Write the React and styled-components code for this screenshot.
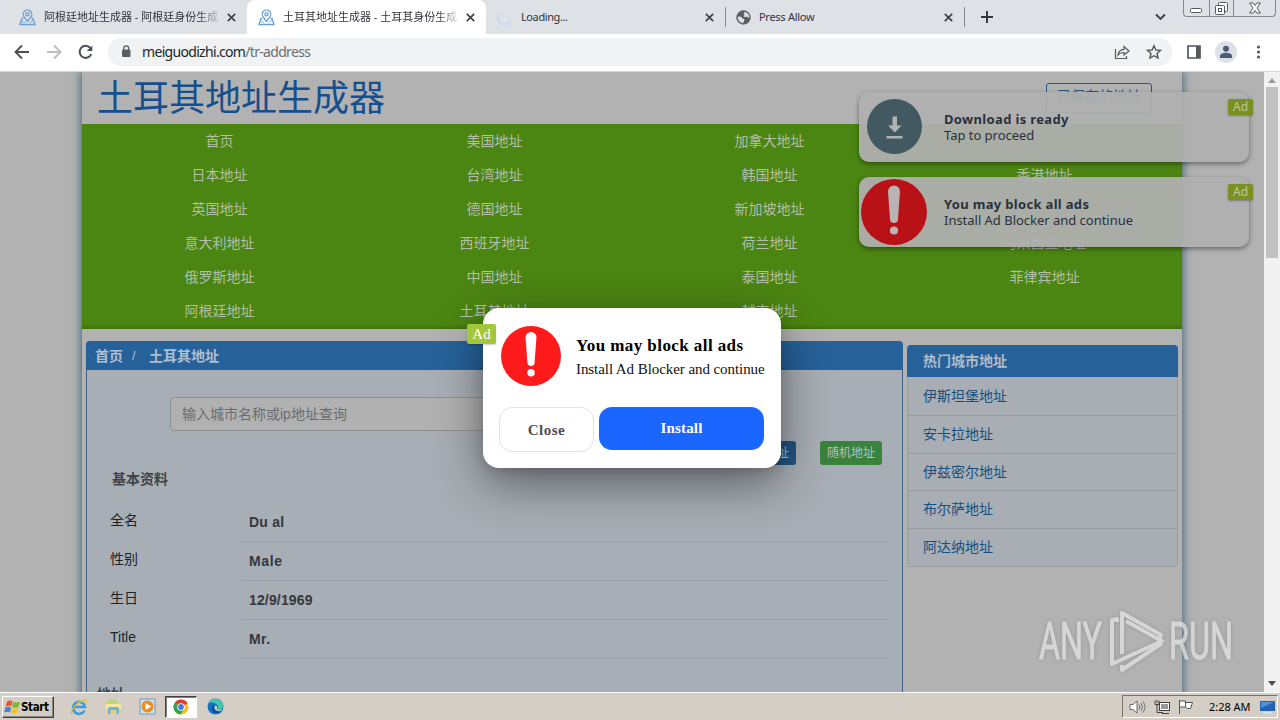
import React from 'react';
import styled, { createGlobalStyle } from 'styled-components';

const Global = createGlobalStyle`
  * { box-sizing: border-box; }
  body { margin: 0; overflow: hidden; font-family: "Liberation Sans", "Noto Sans CJK SC", sans-serif; }
  svg { display: block; flex: none; }
`;
const Screen = styled.div`width: 1280px; height: 720px; display: flex; flex-direction: column; overflow: hidden; position: relative;`;

/* browser chrome */
const TabStrip = styled.div`height: 34px; background: #dee1e6; display: flex; align-items: flex-start; flex: none; padding-left: 8px;`;
const Tab = styled.div`
  width: 239px; height: 34px; display: flex; align-items: center; padding: 0 11px 0 11px;
  border-radius: 8px 8px 0 0; background: ${p => (p.$active ? '#fff' : 'transparent')};
`;
const TabTitle = styled.div`
  font: 11px/16px "Noto Sans", "Noto Sans CJK SC", sans-serif; color: #33363b; letter-spacing: ${p => p.$ls || 0}px;
  width: 176px; margin-left: 8px; white-space: nowrap; overflow: hidden;
  ${p => p.$fade && 'mask-image: linear-gradient(90deg, #000 155px, transparent 178px);'}
`;
const TabClose = styled.div`margin-left: auto;`;
const TabDivider = styled.div`width: 1px; height: 20px; background: #85888d; margin: 7px -1px 0 0;`;
const NewTab = styled.div`margin: 11px 0 0 17px;`;
const WindowControls = styled.div`margin-left: auto; display: flex; align-items: flex-start;`;
const Chevron = styled.div`margin: 13px 17px 0 0;`;
const WinButtons = styled.div`
  display: flex; height: 17px; width: 93px; margin-right: 4px; border: 1px solid #85898f; border-top: 0; border-radius: 0 0 4px 4px;
`;
const WinButton = styled.div`
  width: ${p => p.$w}px; display: flex; justify-content: center; align-items: center;
  & + & { border-left: 1px solid #85898f; }
`;
const Toolbar = styled.div`height: 38px; background: #fff; border-bottom: 1px solid #d5d6d8; display: flex; align-items: center; flex: none; padding: 0 12px 2px 14px;`;
const NavIcons = styled.div`display: flex; gap: 16px; width: 94px;`;
const UrlBar = styled.div`width: 1064px; height: 28px; border-radius: 14px; background: #f0f2f4; display: flex; align-items: center; padding: 0 10px 0 13px;`;
const Url = styled.div`font: 14px/20px "Noto Sans", sans-serif; letter-spacing: -0.68px; margin-left: 11px; color: #222427; span { color: #6a6e73; }`;
const UrlActions = styled.div`margin-left: auto; display: flex; gap: 16px;`;
const ToolIcons = styled.div`margin-left: auto; display: flex; align-items: center; gap: 11px;`;
const Avatar = styled.div`width: 22px; height: 22px; border-radius: 50%; background: #dde1e7; display: flex; align-items: center; justify-content: center;`;

/* page */
const Viewport = styled.div`height: 620px; flex: none; display: flex; overflow: hidden; position: relative;`;
const PageArea = styled.div`width: 1264px; background: #b2b2b2; padding-left: 82px; overflow: hidden;`;
const Site = styled.div`width: 1100px; height: 640px; background: #b2b2b2; box-shadow: 0 0 9px 1px #426377;`;
const SiteHeader = styled.div`height: 52px; display: flex; justify-content: space-between; padding: 0 30px 0 15px;`;
const SiteTitle = styled.h1`margin: 0; font: 400 36px/47px "Noto Sans CJK SC", sans-serif; color: #154f8e;`;
const SavedButton = styled.div`
  width: 106px; height: 30px; margin-top: 11px; border: 1px solid #28548a; border-radius: 3px; color: #28548a;
  font: 14px/20px "Noto Sans CJK SC", sans-serif; text-align: center; padding-top: 1px;
`;
const CountryNav = styled.nav`
  background: #4b8512; height: 205px; display: grid; grid-template-columns: repeat(4, 275px); grid-auto-rows: 34px;
  box-shadow: inset 0 -3px 3px -1px #3e7010;
`;
const CountryLink = styled.a`text-align: center; font: 14px/32px "Noto Sans CJK SC", sans-serif; color: #b3bfa7;`;
const Columns = styled.div`display: flex; align-items: flex-start; gap: 4px; padding: 12px 4px 0;`;
const MainPanel = styled.section`width: 817px; height: 420px; border: 1px solid #38618b; border-radius: 4px 4px 0 0; background: #a8aeb5;`;
const Breadcrumb = styled.div`
  height: 29px; margin: -1px -1px 0; background: #266299; border-radius: 4px 4px 0 0; padding-left: 9px; display: flex;
  font: 700 14px/29px "Noto Sans CJK SC", sans-serif; color: #aebfd0;
  i { font: 13px/29px "Liberation Sans", sans-serif; width: 26px; padding-left: 9px; }
`;
const SearchInput = styled.div`
  width: 500px; height: 34px; margin: 27px 0 0 83px; border: 1px solid #8e9194; border-radius: 4px; background: #b1b1b1; padding-left: 11px;
  font: 14px/32px "Liberation Sans", "Noto Sans CJK SC", sans-serif; color: #6b6c6d;
`;
const ButtonRow = styled.div`display: flex; justify-content: flex-end; gap: 24px; margin: 10px 20px 0 0;`;
const SmallButton = styled.div`
  width: 62px; height: 24px; border-radius: 3px; text-align: center; color: #b3bfc3; background: ${p => (p.$green ? '#39833c' : '#235482')};
  font: 12px/22px "Noto Sans CJK SC", sans-serif;
`;
const SectionTitle = styled.div`font: 700 14px/20px "Noto Sans CJK SC", sans-serif; color: #404447; margin: ${p => p.$m};`;
const Fact = styled.div`height: 39px; display: flex; padding-left: 23px;`;
const FactLabel = styled.div`width: 131px; font: 14px/35px "Liberation Sans", "Noto Sans CJK SC", sans-serif; color: #202326;`;
const FactValue = styled.div`
  width: 647px; padding-left: 8px; border-bottom: 1px solid #9aa0a8; font: 700 14px/39px "Liberation Sans", sans-serif; color: #35383b;
  letter-spacing: ${p => p.$ls || 0}px;
`;
const Sidebar = styled.aside`width: 271px; margin-top: 4px; border: 1px solid #999ea3; border-radius: 4px; background: #a8aeb4;`;
const SidebarTitle = styled.div`
  height: 32px; margin: -1px -1px 0; background: #266299; border-radius: 4px 4px 0 0; padding-left: 16px;
  font: 700 14px/31px "Noto Sans CJK SC", sans-serif; color: #aebccb;
`;
const CityLink = styled.a`
  display: block; height: 37.75px; padding-left: 15px; font: 14px/35px "Noto Sans CJK SC", sans-serif; color: #174e80;
  &:first-of-type { line-height: 37px; }
  & + & { border-top: 1px solid #979ca1; }
`;
const Scrollbar = styled.div`width: 16px; background: #f1f1f1; display: flex; flex-direction: column; align-items: center; padding: 6px 0 6px;`;
const Thumb = styled.div`width: 12px; height: 171px; background: #c1c1c1; margin: 4px 0 auto;`;

/* overlays */
const Toasts = styled.div`position: absolute; left: 859px; top: 20px; width: 390px; display: flex; flex-direction: column; gap: 15px;`;
const Toast = styled.div`
  height: 70px; border-radius: 10px; background: rgba(175, 175, 175, 0.94); box-shadow: 0 2px 5px rgba(0, 0, 0, 0.42);
  display: flex; align-items: center; padding-left: ${p => p.$pad}px; position: relative;
`;
const ToastIcon = styled.div`margin-bottom: ${p => p.$up || 0}px;`;
const ToastText = styled.div`
  margin-left: ${p => p.$ml}px; color: #2b313b; font: 13px/16px "Noto Sans", sans-serif; letter-spacing: ${p => p.$ls}px;
  b { display: block; letter-spacing: ${p => p.$bls}px; }
`;
const ToastBadge = styled.div`
  position: absolute; right: -4px; top: 7px; width: 25px; height: 16px; background: #7b9023; color: #bdc5a4; text-align: center; border-radius: 2px;
  font: 12px/16px "Noto Sans", sans-serif; box-shadow: 0 1px 2px rgba(0, 0, 0, 0.3);
`;
const Modal = styled.div`
  position: absolute; left: 483px; top: 236px; width: 298px; height: 160px; border-radius: 16px; background: #fff; padding: 16px 16px 16px;
  font-family: "Liberation Serif", serif; box-shadow: 0 16px 48px rgba(0, 0, 0, 0.45), 0 4px 12px rgba(0, 0, 0, 0.12);
`;
const ModalBadge = styled.div`
  position: absolute; left: -16px; top: 16px; width: 29px; height: 20px; border-radius: 2px; background: #a4c639; color: #fff; text-align: center;
  font: 15px/20px "Liberation Serif", serif; box-shadow: 0 1px 2px rgba(0, 0, 0, 0.2);
`;
const ModalTop = styled.div`display: flex; height: 83px; padding: 2px 0 0 2px;`;
const ModalText = styled.div`
  margin: 9px 0 0 15px; white-space: nowrap; font-size: 15px; line-height: 22px; color: #111; letter-spacing: -0.07px;
  b { display: block; font-size: 17px; line-height: 22px; color: #000; letter-spacing: 0.42px; height: 23px; }
`;
const ModalButtons = styled.div`display: flex; gap: 5px; align-items: flex-start;`;
const ModalButton = styled.div`
  width: ${p => (p.$primary ? 165 : 95)}px; height: ${p => (p.$primary ? 43 : 45)}px; border-radius: 13px; text-align: center;
  font-weight: 700; font-size: 15px; line-height: ${p => (p.$primary ? 43 : 45)}px; letter-spacing: ${p => (p.$primary ? 0.15 : 0.5)}px;
  background: ${p => (p.$primary ? '#1b66ff' : '#fff')}; color: ${p => (p.$primary ? '#fff' : '#4e5057')};
  border: ${p => (p.$primary ? '0' : '1px solid #e2e3e6')};
`;
const Watermark = styled.div`position: absolute; left: 1036px; top: 534px; opacity: 0.75; filter: drop-shadow(0 0 2px rgba(90, 90, 90, 0.4));`;

/* taskbar */
const Taskbar = styled.div`height: 28px; background: #d4cec6; border-top: 1px solid #fff; display: flex; align-items: center; padding: 0 2px 0 2px; flex: none;`;
const Start = styled.div`
  width: 52px; height: 22px; display: flex; align-items: center; padding-left: 1px; gap: 1px; border: 1px solid; border-color: #fff #404040 #404040 #fff;
  box-shadow: inset -1px -1px 0 #8a867f; font: 700 11.5px/20px "DejaVu Sans Condensed", "DejaVu Sans", sans-serif; letter-spacing: -0.35px; color: #000;
`;
const QuickLaunch = styled.div`display: flex; align-items: center; margin-left: 8px;`;
const TaskIcon = styled.div`
  width: ${p => (p.$active ? 32 : 34)}px; height: 22px; display: flex; align-items: center; justify-content: center;
  ${p => p.$active && 'background: #fff; border: 1px solid; border-color: #404040 #fff #fff #404040; box-shadow: inset 1px 1px 0 #808080; margin: 0 1px;'}
`;
const Tray = styled.div`
  margin-left: auto; height: 23px; width: 156px; display: flex; align-items: center; border: 1px solid; border-color: #77736c #fff #fff #77736c; padding: 0 2px 0 6px;
  gap: 8px;
`;
const Clock = styled.div`font: 11px/16px "Noto Sans", sans-serif; letter-spacing: -0.05px; color: #000; margin: 0 auto 0 6px; white-space: nowrap;`;

const PinIcon = () => (
  <svg width="17" height="17" viewBox="0 0 17 17" fill="none" stroke="#6a9fd2" strokeWidth="1.3">
    <path d="M4.300 9.500H3L1 15.500h15l-2-6h-1.300M8.500 12.500 5.300 8.200a4.300 4.300 0 1 1 6.400 0z" />
    <circle cx="8.500" cy="5.300" r="1.600" />
    <path d="M2.500 12.500l3.500 1M10.500 13.500l4-2.500" strokeWidth=".8" />
  </svg>
);
const Cross = ({ s = 9 }) => (
  <svg width={s} height={s} viewBox="0 0 9 9" stroke="#3e4146" strokeWidth="1.7"><path d="M.8.8l7.4 7.4M8.2.8.8 8.2" /></svg>
);
const GlobeIcon = () => (
  <svg width="15" height="15" viewBox="0 0 15 15">
    <circle cx="7.5" cy="7.5" r="7.2" fill="#5a5e63" />
    <path d="M2 6.500l3 .3 1.600 1.700 1.700.4v1.500L7 13.200C4 12.800 2 10.500 1.700 8zM8.500 1.900l-.8 1.700 1 1.300-1.500 1.200 1.600 1 2.700-.4 1.600 1.500.3-1.500C13.200 4.400 11.200 2.200 8.500 1.900z" fill="#dee1e6" />
  </svg>
);
const Alert = ({ s, red, mark }) => (
  <svg width={s} height={s} viewBox="0 0 66 66">
    <circle cx="33" cy="33" r="33" fill={red} />
    <path d="M27 12.500a6 6 0 0 1 12 0l-2 27.500a4 4 0 0 1-8 0z" fill={mark} />
    <circle cx="33" cy="51.500" r="4.100" fill={mark} />
  </svg>
);

const countries = [
  '首页', '美国地址', '加拿大地址', '',
  '日本地址', '台湾地址', '韩国地址', '香港地址',
  '英国地址', '德国地址', '新加坡地址', '',
  '意大利地址', '西班牙地址', '荷兰地址', '马来西亚地址',
  '俄罗斯地址', '中国地址', '泰国地址', '菲律宾地址',
  '阿根廷地址', '土耳其地址', '越南地址', '',
];
const facts = [['全名', 'Du al', 0.2], ['性别', 'Male', 0.6], ['生日', '12/9/1969', 0.15], ['Title', 'Mr.', 0.4]];
const cities = ['伊斯坦堡地址', '安卡拉地址', '伊兹密尔地址', '布尔萨地址', '阿达纳地址'];

function Chrome() {
  return (
    <>
      <TabStrip>
        <Tab><PinIcon /><TabTitle $fade>阿根廷地址生成器 - 阿根廷身份生成</TabTitle><TabClose><Cross /></TabClose></Tab>
        <Tab $active><PinIcon /><TabTitle $fade>土耳其地址生成器 - 土耳其身份生成</TabTitle><TabClose><Cross /></TabClose></Tab>
        <Tab>
          <svg width="16" height="16" viewBox="0 0 16 16" fill="none" stroke="#c6d7f5" strokeWidth="1.8"><path d="M1.500 5a7 7 0 0 0 12 7.200" /></svg>
          <TabTitle $ls={-0.4}>Loading...</TabTitle><TabClose><Cross /></TabClose>
        </Tab>
        <TabDivider />
        <Tab><GlobeIcon /><TabTitle $ls={-0.28}>Press Allow</TabTitle><TabClose><Cross /></TabClose></Tab>
        <TabDivider />
        <NewTab><svg width="12" height="12" viewBox="0 0 12 12" stroke="#33363b" strokeWidth="1.900"><path d="M6 0v12M0 6h12" /></svg></NewTab>
        <WindowControls>
          <Chevron><svg width="11" height="8" viewBox="0 0 11 8" fill="none" stroke="#3c4045" strokeWidth="1.900"><path d="M1 1.500l4.500 4.500L10 1.500" /></svg></Chevron>
          <WinButtons>
            <WinButton $w={25}><svg width="13" height="17" viewBox="0 0 13 17" fill="#fff" stroke="#55595f"><rect x=".5" y="8.500" width="11" height="4" rx="1" /></svg></WinButton>
            <WinButton $w={25}><svg width="13" height="17" viewBox="0 0 13 17" fill="#fff" stroke="#55595f"><rect x="3.500" y="2.500" width="9" height="9" rx="1" /><rect x=".5" y="5.500" width="9" height="9" rx="1" /><rect x="3.500" y="8.500" width="3" height="3" /></svg></WinButton>
            <WinButton $w={42}><svg width="12" height="17" viewBox="0 0 12 17" fill="#fff" stroke="#55595f"><path d="M.7 3h3.500L6 5.500 7.800 3h3.500L8 8l3.300 5H7.800L6 10.500 4.200 13H.7L4 8z" /></svg></WinButton>
          </WinButtons>
        </WindowControls>
      </TabStrip>
      <Toolbar>
        <NavIcons>
          <svg width="16" height="16" viewBox="0 0 16 16" fill="none" stroke="#4c5054" strokeWidth="1.900"><path d="M15 8H2M8 1.500 1.500 8 8 14.500" /></svg>
          <svg width="16" height="16" viewBox="0 0 16 16" fill="none" stroke="#bcbec1" strokeWidth="1.900"><path d="M1 8h13M8 1.500 14.500 8 8 14.500" /></svg>
          <svg width="16" height="16" viewBox="0 0 16 16"><path d="M13.300 10A6 6 0 1 1 12.300 4" fill="none" stroke="#4c5054" strokeWidth="2" /><path d="M14.300 1.500v5.500H8.800z" fill="#4c5054" /></svg>
        </NavIcons>
        <UrlBar>
          <svg width="10" height="13" viewBox="0 0 10 13"><rect x="1" y="4.500" width="8.500" height="7.500" rx="1" fill="#5a5e63" /><path d="M2.800 5V3.200a2.400 2.400 0 0 1 4.800 0V5" fill="none" stroke="#5a5e63" strokeWidth="1.300" /></svg>
          <Url>meiguodizhi.com<span>/tr-address</span></Url>
          <UrlActions>
            <svg width="16" height="16" viewBox="0 0 16 16" fill="none" stroke="#55595e" strokeWidth="1.200"><path d="M1.500 5v9.500h11V12M4 11c.5-4 3-5.500 6-5.600V2.500L15 7l-5 4V8.500C7.500 8.500 5.500 9 4 11z" /></svg>
            <svg width="16" height="16" viewBox="0 0 16 16" fill="none" stroke="#55595e" strokeWidth="1.400"><path d="M8 1.700l1.900 4.300 4.700.4-3.600 3.100 1.100 4.600L8 11.700l-4.100 2.400L5 9.500 1.400 6.400 6.100 6z" /></svg>
          </UrlActions>
        </UrlBar>
        <ToolIcons>
          <svg width="17" height="14" viewBox="0 0 17 14"><path d="M1 1h12v12H1z" fill="none" stroke="#55585d" strokeWidth="1.700" /><path d="M9 1h4v12H9z" fill="#55585d" /></svg>
          <Avatar><svg width="14" height="14" viewBox="0 0 14 14" fill="#4a5a78"><circle cx="7" cy="3.700" r="3" /><path d="M1 13v-2c0-2 3.500-3.200 6-3.200s6 1.200 6 3.200v2z" /></svg></Avatar>
          <svg width="20" height="14" viewBox="0 0 20 14" fill="#55585d"><circle cx="10.500" cy="2" r="1.600" /><circle cx="10.500" cy="7" r="1.600" /><circle cx="10.500" cy="12" r="1.600" /></svg>
        </ToolIcons>
      </Toolbar>
    </>
  );
}

function AddressPage() {
  return (
    <PageArea>
      <Site>
        <SiteHeader><SiteTitle>土耳其地址生成器</SiteTitle><SavedButton>已保存的地址</SavedButton></SiteHeader>
        <CountryNav>{countries.map((c, i) => <CountryLink key={i}>{c}</CountryLink>)}</CountryNav>
        <Columns>
          <MainPanel>
            <Breadcrumb>首页<i>/</i>土耳其地址</Breadcrumb>
            <SearchInput>输入城市名称或ip地址查询</SearchInput>
            <ButtonRow><SmallButton>保存地址</SmallButton><SmallButton $green>随机地址</SmallButton></ButtonRow>
            <SectionTitle $m="3px 0 15px 25px">基本资料</SectionTitle>
            {facts.map(([k, v, ls]) => <Fact key={k}><FactLabel>{k}</FactLabel><FactValue $ls={ls}>{v}</FactValue></Fact>)}
            <SectionTitle $m="24px 0 0 10px">地址</SectionTitle>
          </MainPanel>
          <Sidebar>
            <SidebarTitle>热门城市地址</SidebarTitle>
            {cities.map(c => <CityLink key={c}>{c}</CityLink>)}
          </Sidebar>
        </Columns>
      </Site>
    </PageArea>
  );
}

function Ads() {
  return (
    <>
      <Toasts>
        <Toast $pad={8}>
          <ToastIcon $up={1}>
            <svg width="55" height="55" viewBox="0 0 55 55"><circle cx="27.500" cy="27.500" r="27.500" fill="#435962" /><path d="M25.500 17.500h4.500v9h4.500l-6.700 7-6.700-7h4.400zM19.500 37h16v2.500h-16z" fill="#b0b3b4" /></svg>
          </ToastIcon>
          <ToastText $ml={22} $ls={-0.03} $bls={0.35}><b>Download is ready</b>Tap to proceed</ToastText>
          <ToastBadge>Ad</ToastBadge>
        </Toast>
        <Toast $pad={2}>
          <ToastIcon><Alert s={66} red="#b81217" mark="#b9b3b3" /></ToastIcon>
          <ToastText $ml={17} $ls={-0.02} $bls={0.32}><b>You may block all ads</b>Install Ad Blocker and continue</ToastText>
          <ToastBadge>Ad</ToastBadge>
        </Toast>
      </Toasts>
      <Modal>
        <ModalBadge>Ad</ModalBadge>
        <ModalTop>
          <Alert s={60} red="#ff1a1c" mark="#fff" />
          <ModalText><b>You may block all ads</b>Install Ad Blocker and continue</ModalText>
        </ModalTop>
        <ModalButtons><ModalButton>Close</ModalButton><ModalButton $primary>Install</ModalButton></ModalButtons>
      </Modal>
      <Watermark>
        <svg width="200" height="70" viewBox="0 0 200 70">
          <g fill="#e2e2e2" stroke="#e2e2e2" strokeWidth=".9" fontFamily="Roboto, sans-serif" fontWeight="400" fontSize="52">
            <text x="3" y="53" textLength="63" lengthAdjust="spacingAndGlyphs">ANY</text>
            <text x="133" y="53" textLength="64" lengthAdjust="spacingAndGlyphs">RUN</text>
          </g>
          <g fill="none" stroke="#e2e2e2" strokeWidth="4" strokeLinejoin="round">
            <path d="M86 48V7l39 22-2 5" />
            <path d="M81 16v-3l-5 1v44l50-23-36-20" />
            <path d="M86 59v5l40-27" />
          </g>
        </svg>
      </Watermark>
    </>
  );
}

function WindowsBar() {
  return (
    <Taskbar>
      <Start>
        <svg width="16" height="16" viewBox="0 0 16 16"><path d="M3 2.500q3-2 5.500 0L7.300 7.500q-2-1.500-5.500 0z" fill="#e8572a" /><path d="M9.300 2.800q3 1.500 6.500 0L14.500 8q-3 1.500-6.500 0z" fill="#7cb83c" /><path d="M1.500 8.500q3-1.500 5.500 0L6 13.500q-2-1.700-5.800 0z" fill="#3f83d5" /><path d="M7.800 9q3 1.500 6.500 0L13 14q-3 1.500-6.200 0z" fill="#f5c22e" /></svg>
        Start
      </Start>
      <QuickLaunch>
        <TaskIcon>
          <svg width="18" height="18" viewBox="0 0 18 18" fill="none"><path d="M14.500 12.500A6 6 0 1 1 15 9H4" stroke="#3c9ddd" strokeWidth="2.600" /><path d="M2 16C-1 13 9 2 15 2c2 0 1.800 2 1 3.500" stroke="#e7bd3f" strokeWidth="1.300" /></svg>
        </TaskIcon>
        <TaskIcon>
          <svg width="17" height="17" viewBox="0 0 17 17"><path d="M1 3h6l1 2h7v10H1z" fill="#e9cf73" /><path d="M3 1.500h9V6H3z" fill="#b8d87a" /><path d="M1 6h15v5H1z" fill="#f5e6a1" /><path d="M3 16v-5q0-2 2-2h7q2 0 2 2v5h-2.500v-4h-6v4z" fill="#69b3de" /></svg>
        </TaskIcon>
        <TaskIcon>
          <svg width="17" height="17" viewBox="0 0 17 17"><path d="M1 1h15v15H1z" fill="#cfe0ee" stroke="#6b9ac2" /><circle cx="8.500" cy="8.500" r="6" fill="#f38a1c" /><path d="M6.500 5l6 3.500-6 3.500z" fill="#fff" /></svg>
        </TaskIcon>
        <TaskIcon $active>
          <svg width="16" height="16" viewBox="0 0 16 16"><circle cx="8" cy="8" r="7.500" fill="#fbc116" /><path d="M8 8 1.500 4.200A7.500 7.500 0 0 1 14.500 4.200z" fill="#e33b2e" /><path d="M8 8 1.500 4.200A7.500 7.500 0 0 0 7.600 15.500L11 9.800z" fill="#2da14c" /><circle cx="8" cy="8" r="3.800" fill="#fff" /><circle cx="8" cy="8" r="2.900" fill="#3f7ee8" /></svg>
        </TaskIcon>
        <TaskIcon>
          <svg width="17" height="17" viewBox="0 0 17 17"><circle cx="8.500" cy="8.500" r="8" fill="#1674c4" /><path d="M1 6C3 0 13-1.500 16.300 6.500c.7 3-1.500 5-4.300 4.700-2-.2-1-1.500-1-2.400C10.500 5 4 3 1 6z" fill="#43c8ac" /><path d="M7.500 7c-2 3 .5 7.500 7 6.300C9 18 3 13.500 4.500 8.500 5.200 7 6.500 6.500 7.500 7z" fill="#0c4f9c" /><path d="M8 8c1.500-1 2.500.5 2 2s1.500 2.200 5.500 1.200c-1.500 2.300-5 2.500-6.800.8C7.500 11 7.300 9 8 8z" fill="#d4cec6" /></svg>
        </TaskIcon>
      </QuickLaunch>
      <Tray>
        <svg width="17" height="16" viewBox="0 0 17 16" fill="#fff" stroke="#666"><path d="M1 5.500h3L8 2v12L4 10.500H1z" /><path d="M10 5.500q2 2.500 0 5M12 4q3 4 0 8M14 2.500q4 5.500 0 11" fill="none" strokeWidth=".9" /></svg>
        <svg width="16" height="16" viewBox="0 0 16 16" fill="#fff" stroke="#44413d"><rect x="5.500" y="3.500" width="10" height="8" /><path d="M7 5h7v5H7z" fill="#999" stroke="none" /><path d="M1 1.500v4h4v-4M3 5.500v8h6M8 14.500h7M3 1v3" fill="none" /></svg>
        <svg width="17" height="16" viewBox="0 0 17 16" fill="#fff" stroke="#555"><path d="M1.500 1v14M2 2h5.500v6H2M7.500 3.500h7l-2 6h-3l-2-1.500z" /></svg>
        <Clock>2:28 AM</Clock>
        <svg width="15" height="14" viewBox="0 0 15 14"><path d="M0 1h15v10H0z" fill="#2462b4" /><path d="M1 2h13L1 8z" fill="#4b91db" /><path d="M3 12h9v1.500H3z" fill="#d8e5f2" /></svg>
      </Tray>
    </Taskbar>
  );
}

export default function App() {
  return (
    <Screen>
      <Global />
      <Chrome />
      <Viewport>
        <AddressPage />
        <Scrollbar>
          <svg width="8" height="5" viewBox="0 0 8 5"><path d="M4 0l4 5H0z" fill="#9b9b9b" /></svg>
          <Thumb />
          <svg width="8" height="5" viewBox="0 0 8 5"><path d="M4 5L0 0h8z" fill="#4d4d4d" /></svg>
        </Scrollbar>
        <Ads />
      </Viewport>
      <WindowsBar />
    </Screen>
  );
}
